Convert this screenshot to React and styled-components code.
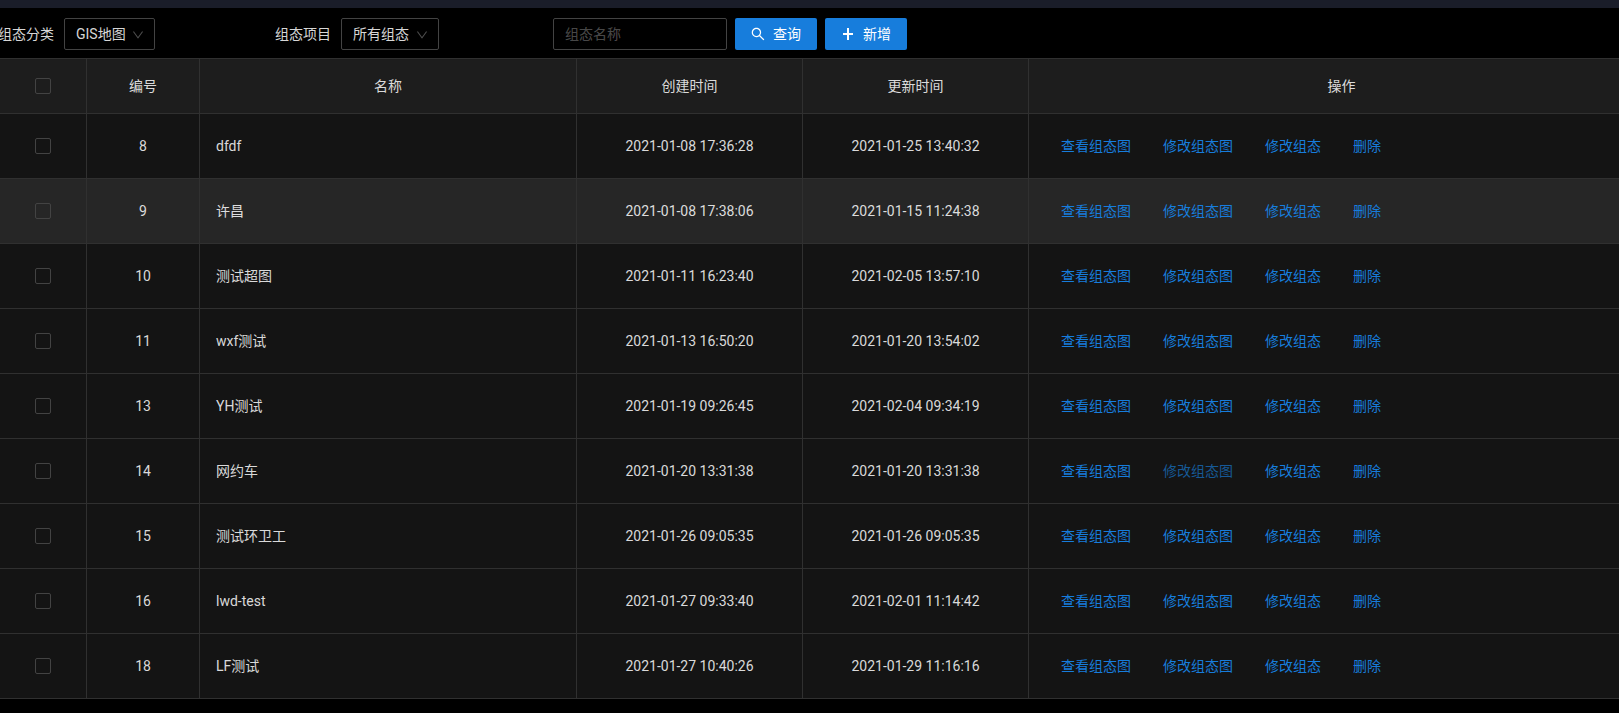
import React from "react";
import styled, { createGlobalStyle } from "styled-components";

const GlobalStyle = createGlobalStyle`
  *, *::before, *::after { box-sizing: border-box; }
  body {
    margin: 0;
    background: #000;
    color: rgba(255, 255, 255, 0.85);
    font-family: Roboto, "Noto Sans CJK SC", sans-serif;
    font-size: 14px;
    line-height: 22px;
  }
  button, input, select { font: inherit; }
`;

const Page = styled.main`
  overflow: hidden;
  border-top: 8px solid #1a1d29;
`;

const Toolbar = styled.form`
  display: grid;
  grid-template-columns: 277px 278px 1fr;
  align-items: center;
  margin-left: -2px;
  padding: 10px 0 8px;
`;

const Field = styled.div`
  display: flex;
  align-items: center;
  gap: 10px;
`;

const SelectBox = styled.div`
  position: relative;
  width: ${(p) => p.$width}px;
  height: 32px;
`;

const Select = styled.select`
  appearance: none;
  width: 100%;
  height: 32px;
  margin: 0;
  padding: 0 24px 0 11px;
  border: 1px solid #434343;
  border-radius: 2px;
  background: transparent;
  color: rgba(255, 255, 255, 0.85);
  outline: none;
  display: block;
`;

const Arrow = styled.svg`
  position: absolute;
  top: 11px;
  right: 11px;
  width: 12px;
  height: 12px;
  fill: rgba(255, 255, 255, 0.3);
  pointer-events: none;
`;

const Actions = styled.div`
  display: flex;
  gap: 8px;
`;

const TextInput = styled.input`
  width: 174px;
  height: 32px;
  padding: 4px 11px;
  border: 1px solid #434343;
  border-radius: 2px;
  background: transparent;
  color: rgba(255, 255, 255, 0.85);
  outline: none;
  &::placeholder { color: rgba(255, 255, 255, 0.3); opacity: 1; }
`;

const PrimaryButton = styled.button`
  display: inline-flex;
  align-items: center;
  gap: 8px;
  height: 32px;
  padding: 0 16px;
  border: 0;
  border-radius: 2px;
  background: #177ddc;
  color: #fff;
  cursor: pointer;
  svg { width: 14px; height: 14px; fill: currentColor; }
`;

const Table = styled.table`
  width: calc(100% + 36px);
  table-layout: fixed;
  border-collapse: separate;
  border-spacing: 0;
  border-top: 1px solid #303030;
`;

const Col = styled.col`
  width: ${(p) => (p.$width ? `${p.$width}px` : "auto")};
`;

const HeadCell = styled.th`
  padding: 16px;
  background: #1d1d1d;
  border-right: 1px solid #303030;
  border-bottom: 1px solid #303030;
  font-weight: 400;
  text-align: center;
`;

const Row = styled.tr`
  background: ${(p) => (p.$active ? "#262626" : "#141414")};
`;

const Cell = styled.td`
  height: 65px;
  padding: 0 16px;
  border-right: 1px solid #303030;
  border-bottom: 1px solid #303030;
  text-align: ${(p) => p.$align || "center"};
`;

const Checkbox = styled.input`
  appearance: none;
  display: block;
  width: 16px;
  height: 16px;
  margin: 0 auto;
  border: 1px solid #434343;
  border-radius: 2px;
  background: transparent;
  &:checked { background: #177ddc; border-color: #177ddc; }
`;

const Links = styled.div`
  display: flex;
`;

const LinkButton = styled.button`
  height: 32px;
  padding: 0 16px;
  border: 0;
  background: transparent;
  color: #177ddc;
  white-space: nowrap;
  cursor: pointer;
  &:disabled { color: #165996; cursor: default; }
`;

const DownArrow = () => (
  <Arrow viewBox="64 64 896 896" aria-hidden="true">
    <path d="M884 256h-75c-5.1 0-9.9 2.5-12.9 6.6L512 654.2 227.9 262.6c-3-4.1-7.8-6.6-12.9-6.6h-75c-6.5 0-10.3 7.4-6.5 12.7l352.6 486.1c12.8 17.6 39 17.6 51.7 0l352.6-486.1c3.9-5.3.1-12.7-6.4-12.7z" />
  </Arrow>
);

const SearchIcon = () => (
  <svg viewBox="64 64 896 896" aria-hidden="true">
    <path d="M909.6 854.5L649.9 594.8C690.2 542.7 712 479 712 412c0-80.2-31.3-155.4-87.9-212.1-56.6-56.7-132-87.9-212.1-87.9s-155.5 31.3-212.1 87.9C143.2 256.5 112 331.8 112 412c0 80.1 31.3 155.5 87.9 212.1C256.5 680.8 331.8 712 412 712c67 0 130.6-21.8 182.7-62l259.7 259.6a8.2 8.2 0 0011.6 0l43.6-43.5a8.2 8.2 0 000-11.6zM570.4 570.4C528 612.7 471.8 636 412 636s-116-23.3-158.4-65.6C211.3 528 188 471.8 188 412s23.3-116.1 65.6-158.4C296 211.3 352.2 188 412 188s116.1 23.2 158.4 65.6S636 352.2 636 412s-23.3 116.1-65.6 158.4z" />
  </svg>
);

const PlusIcon = () => (
  <svg viewBox="0 0 14 14" aria-hidden="true">
    <path d="M6 1h2v5h4v2H8v5H6V8H2V6h4z" />
  </svg>
);

const rows = [
  { id: 8, name: "dfdf", created: "2021-01-08 17:36:28", updated: "2021-01-25 13:40:32" },
  { id: 9, name: "许昌", created: "2021-01-08 17:38:06", updated: "2021-01-15 11:24:38", active: true },
  { id: 10, name: "测试超图", created: "2021-01-11 16:23:40", updated: "2021-02-05 13:57:10" },
  { id: 11, name: "wxf测试", created: "2021-01-13 16:50:20", updated: "2021-01-20 13:54:02" },
  { id: 13, name: "YH测试", created: "2021-01-19 09:26:45", updated: "2021-02-04 09:34:19" },
  { id: 14, name: "网约车", created: "2021-01-20 13:31:38", updated: "2021-01-20 13:31:38", locked: true },
  { id: 15, name: "测试环卫工", created: "2021-01-26 09:05:35", updated: "2021-01-26 09:05:35" },
  { id: 16, name: "lwd-test", created: "2021-01-27 09:33:40", updated: "2021-02-01 11:14:42" },
  { id: 18, name: "LF测试", created: "2021-01-27 10:40:26", updated: "2021-01-29 11:16:16" },
];

export default function App() {
  return (
    <>
      <GlobalStyle />
      <Page>
        <Toolbar onSubmit={(e) => e.preventDefault()}>
          <Field>
            <label htmlFor="category">组态分类</label>
            <SelectBox $width={91}>
              <Select id="category"><option>GIS地图</option></Select>
              <DownArrow />
            </SelectBox>
          </Field>
          <Field>
            <label htmlFor="project">组态项目</label>
            <SelectBox $width={98}>
              <Select id="project"><option>所有组态</option></Select>
              <DownArrow />
            </SelectBox>
          </Field>
          <Actions>
            <TextInput type="text" placeholder="组态名称" aria-label="组态名称" />
            <PrimaryButton type="submit"><SearchIcon />查询</PrimaryButton>
            <PrimaryButton type="button"><PlusIcon />新增</PrimaryButton>
          </Actions>
        </Toolbar>
        <Table>
          <colgroup>
            <Col $width={87} />
            <Col $width={113} />
            <Col $width={377} />
            <Col $width={226} />
            <Col $width={226} />
            <Col />
          </colgroup>
          <thead>
            <tr>
              <HeadCell><Checkbox type="checkbox" aria-label="全选" /></HeadCell>
              <HeadCell>编号</HeadCell>
              <HeadCell>名称</HeadCell>
              <HeadCell>创建时间</HeadCell>
              <HeadCell>更新时间</HeadCell>
              <HeadCell>操作</HeadCell>
            </tr>
          </thead>
          <tbody>
            {rows.map((row) => (
              <Row key={row.id} $active={row.active}>
                <Cell><Checkbox type="checkbox" aria-label={`选择 ${row.id}`} /></Cell>
                <Cell>{row.id}</Cell>
                <Cell $align="left">{row.name}</Cell>
                <Cell>{row.created}</Cell>
                <Cell>{row.updated}</Cell>
                <Cell $align="left">
                  <Links>
                    <LinkButton type="button">查看组态图</LinkButton>
                    <LinkButton type="button" disabled={row.locked}>修改组态图</LinkButton>
                    <LinkButton type="button">修改组态</LinkButton>
                    <LinkButton type="button">删除</LinkButton>
                  </Links>
                </Cell>
              </Row>
            ))}
          </tbody>
        </Table>
      </Page>
    </>
  );
}
